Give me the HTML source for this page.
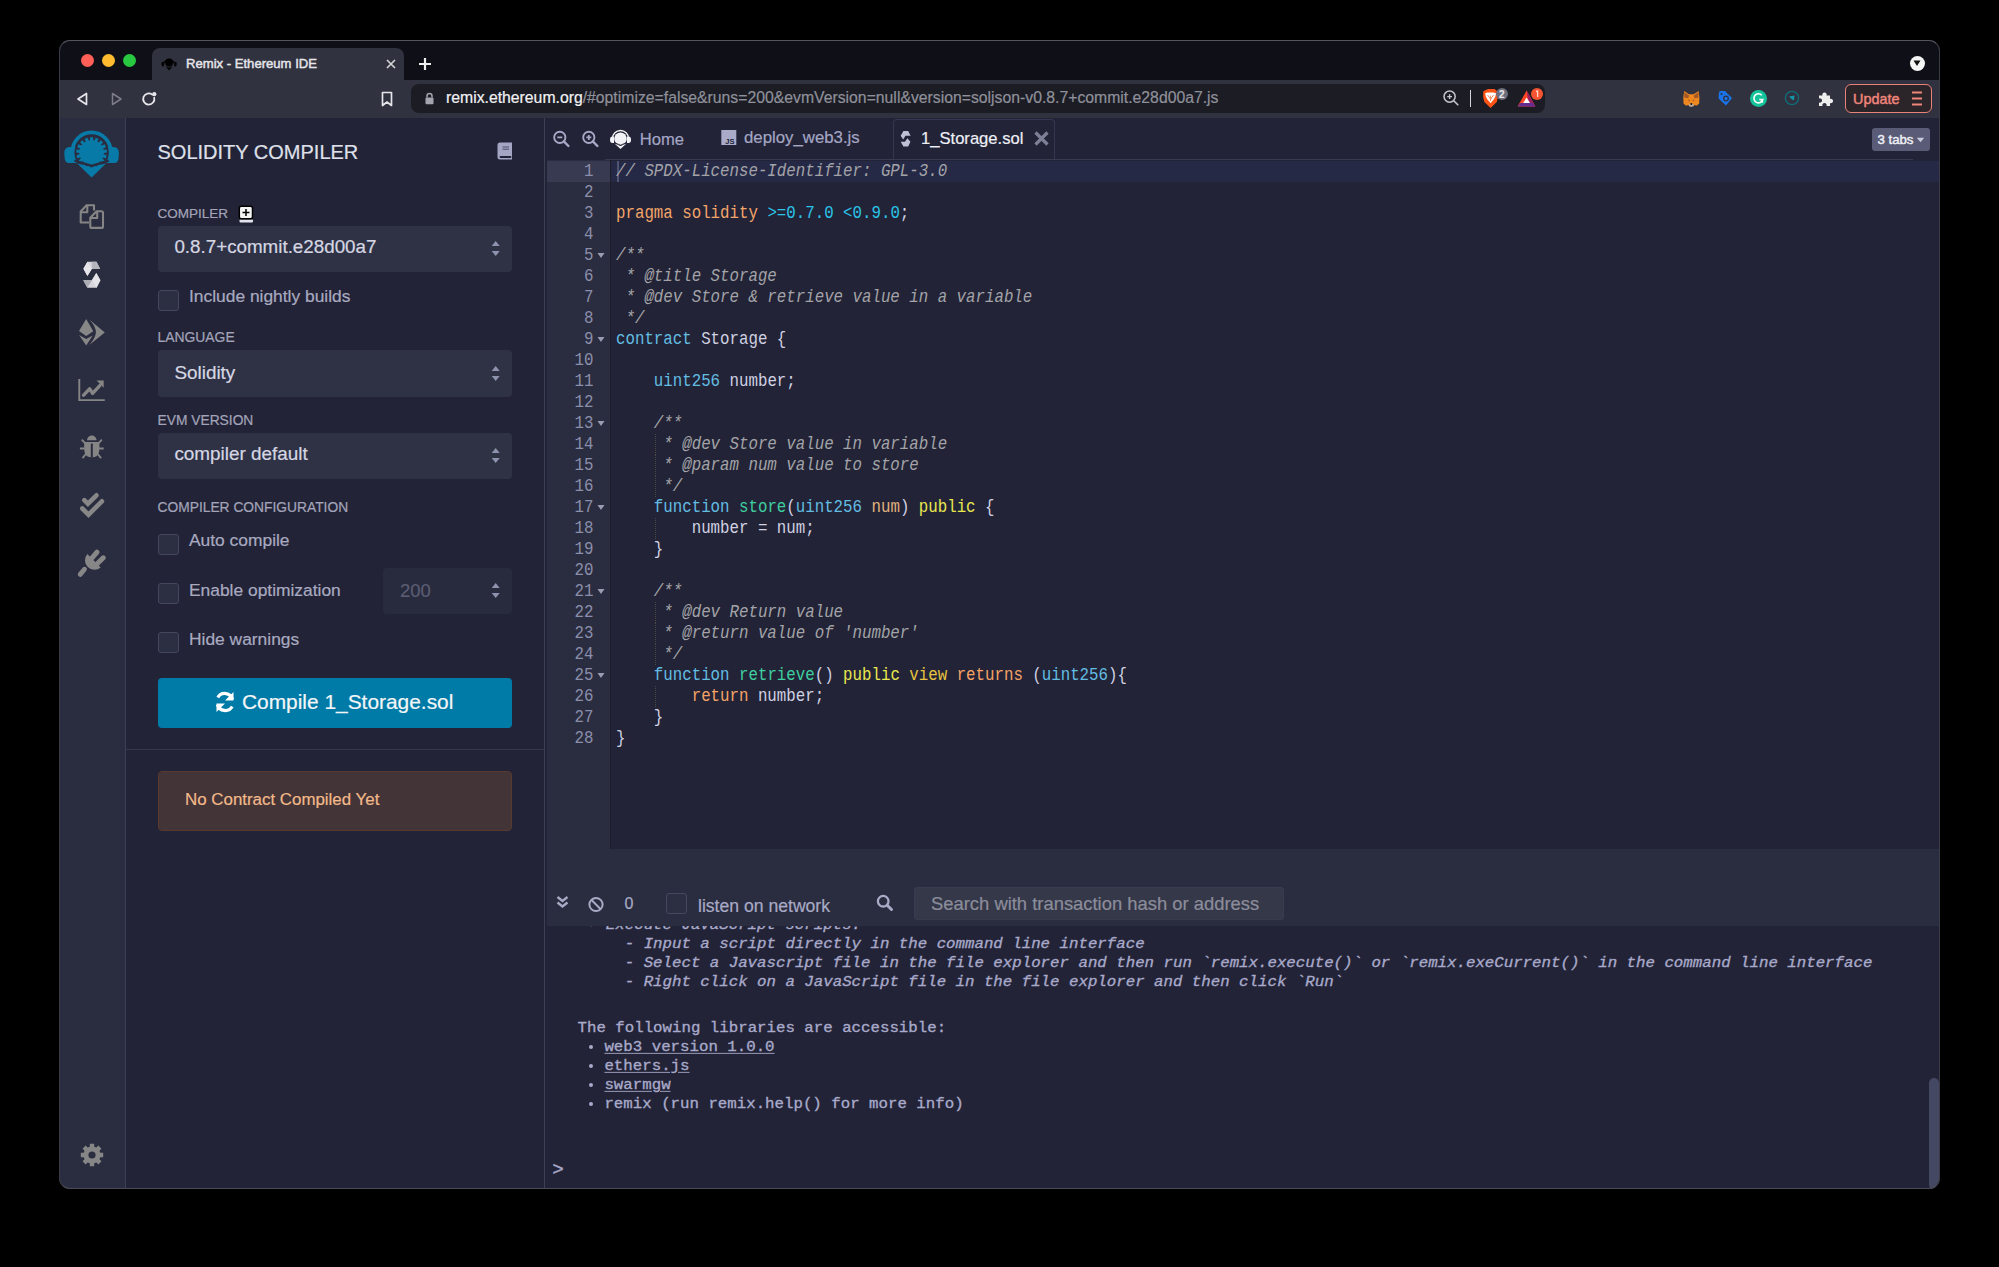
<!DOCTYPE html>
<html><head><meta charset="utf-8">
<style>
*{box-sizing:border-box;margin:0;padding:0}
html,body{width:1999px;height:1267px;background:#000;overflow:hidden;font-family:"Liberation Sans",sans-serif}
.a{position:absolute}
#win{position:absolute;left:59px;top:40px;width:1881px;height:1149px;overflow:hidden;border-radius:11px;background:#222336}
#pg{position:absolute;left:-59px;top:-40px;width:1999px;height:1267px}
#winb{position:absolute;left:59px;top:40px;width:1881px;height:1149px;border-radius:11px;border:1px solid #3a3b44;border-top-color:#55565d;border-bottom-color:#4a4b54;pointer-events:none}
.mono{font-family:"Liberation Mono",monospace}
.t{white-space:pre;line-height:1}
.t:not(.mono){-webkit-text-stroke-width:0.2px}
</style></head><body>
<div id="win"><div id="pg">
  <!-- title bar -->
  <div class="a" style="left:59px;top:40px;width:1881px;height:40px;background:#0e0f17"></div>
  <div class="a" style="left:80.5px;top:53.5px;width:13px;height:13px;border-radius:50%;background:#fe5f57"></div>
  <div class="a" style="left:101.5px;top:53.5px;width:13px;height:13px;border-radius:50%;background:#febc2e"></div>
  <div class="a" style="left:122.5px;top:53.5px;width:13px;height:13px;border-radius:50%;background:#28c840"></div>
  <!-- browser tab -->
  <div class="a" style="left:152px;top:48px;width:252px;height:33px;background:#30323f;border-radius:8px 8px 0 0"></div>
  <svg class="a" style="left:158px;top:53px" width="22" height="22" viewBox="158 53 22 22"><path d="M163.2 65A6 6 0 0 1 175 65" fill="none" stroke="#080808" stroke-width="1.3"/><path d="M163.8 61.8H162.6Q161.4 62 161.4 64Q161.5 66.3 162.8 66.4H164z" fill="#050505"/><path d="M174.4 61.8H175.6Q176.8 62 176.8 64Q176.7 66.3 175.4 66.4H174.2z" fill="#050505"/><circle cx="169.1" cy="62.6" r="4" fill="#000"/><path d="M165.6 66.2L169.1 67.6L172.6 66.2L169.1 70.6z" fill="#030303"/></svg>
  <div class="a t" style="left:186px;top:57.3px;font-size:13.1px;color:#e6e6ea;-webkit-text-stroke:0.45px #e6e6ea">Remix - Ethereum IDE</div>
  <svg class="a" style="left:386px;top:59px" width="10" height="10" viewBox="0 0 10 10"><path d="M1 1L9 9M9 1L1 9" stroke="#d6d6da" stroke-width="1.6"/></svg>
  <svg class="a" style="left:418px;top:57px" width="14" height="14" viewBox="0 0 14 14"><path d="M7 1V13M1 7H13" stroke="#f0f0f0" stroke-width="2.2"/></svg>
  <!-- title bar right dropdown -->
  <div class="a" style="left:1909.5px;top:55.5px;width:15px;height:15px;border-radius:50%;background:#f5f5f5"></div>
  <svg class="a" style="left:1911px;top:58px" width="12" height="10" viewBox="0 0 12 10"><path d="M2.5 2.5H9.5L6 8z" fill="#111"/></svg>
  <!-- toolbar -->
  <div class="a" style="left:59px;top:80px;width:1881px;height:38px;background:#30323f"></div>
  <svg class="a" style="left:74px;top:90px" width="18" height="18" viewBox="0 0 18 18"><path d="M12.5 3.5V14.5L4 9z" fill="none" stroke="#e6e6ea" stroke-width="1.7" stroke-linejoin="round"/></svg>
  <svg class="a" style="left:107px;top:90px" width="18" height="18" viewBox="0 0 18 18"><path d="M5.5 3.5V14.5L14 9z" fill="none" stroke="#7c7d88" stroke-width="1.5" stroke-linejoin="round"/></svg>
  <svg class="a" style="left:139px;top:89px" width="20" height="20" viewBox="0 0 20 20"><path d="M15.2 8.6A5.6 5.6 0 1 1 13.3 5.6" fill="none" stroke="#e6e6ea" stroke-width="1.8" stroke-linecap="round"/><circle cx="15.3" cy="5.2" r="2.1" fill="#e6e6ea"/></svg>
  <svg class="a" style="left:379px;top:90px" width="16" height="18" viewBox="0 0 16 18"><path d="M3.5 2.5H12.5V15.5L8 12L3.5 15.5z" fill="none" stroke="#e6e6ea" stroke-width="1.7" stroke-linejoin="round"/></svg>
  <!-- address bar -->
  <div class="a" style="left:411px;top:84px;width:1134px;height:29px;background:#1b1c24;border-radius:8px"></div>
  <svg class="a" style="left:424px;top:92px" width="11" height="13" viewBox="0 0 11 13"><path d="M3 5.5V4a2.5 2.5 0 0 1 5 0v1.5" fill="none" stroke="#a3a4ad" stroke-width="1.5"/><rect x="1.5" y="5.5" width="8" height="6.8" rx="1" fill="#a3a4ad"/></svg>
  <div class="a t" style="left:446px;top:90.4px;font-size:15.78px;color:#8f909a"><span style="color:#f2f2f4">remix.ethereum.org</span>/#optimize=false&amp;runs=200&amp;evmVersion=null&amp;version=soljson-v0.8.7+commit.e28d00a7.js</div>
  <svg class="a" style="left:1441.5px;top:89px" width="18" height="18" viewBox="0 0 18 18"><circle cx="7.6" cy="7.6" r="5.6" fill="none" stroke="#c4c5cc" stroke-width="1.5"/><path d="M11.7 11.7L15.8 15.8" stroke="#c4c5cc" stroke-width="1.6" stroke-linecap="round"/><path d="M7.6 5.2V10M5.2 7.6H10" stroke="#c4c5cc" stroke-width="1.4"/></svg>
  <div class="a" style="left:1469.5px;top:90px;width:1.3px;height:17px;background:#d6d6da"></div>
  <svg class="a" style="left:1478px;top:84px" width="24" height="28" viewBox="1478 84 24 28"><path d="M1488.2 89.1H1494.6L1496.2 90.6L1497.6 91.4L1497.8 97.5L1496.8 102L1490.6 108L1484.4 102L1483.2 97.5L1483.2 91.4L1484.8 90.6z" fill="#fb5215"/><path d="M1485.2 93.3L1487.5 92.6H1493.7L1496 93.3L1495.4 96.5L1493.8 99.5L1492.2 101.2L1490.6 103.2L1489 101.2L1487.4 99.5L1485.8 96.5z" fill="#fff"/><path d="M1487.6 95L1490.6 99.2L1493.6 95M1490.6 95.6V101" stroke="#f08a60" stroke-width="1" fill="none"/></svg>
  <div class="a" style="left:1495.7px;top:88.4px;width:12px;height:12px;border-radius:50%;background:#6b6d7b"></div>
  <div class="a t" style="left:1498.9px;top:90px;font-size:10px;font-weight:700;color:#e6e6ea">2</div>
  <svg class="a" style="left:1512px;top:84px" width="24" height="26" viewBox="1512 84 24 26"><path d="M1526.6 90.6L1535.4 106.6H1517.6z" fill="#ff4724"/><path d="M1526.6 90.6L1535.4 106.6H1529z" fill="#9e1f63"/><path d="M1517.6 106.6L1520.5 103H1532.7L1535.4 106.6z" fill="#662d91"/><path d="M1526.6 97.5L1530 103H1523.2z" fill="#fff"/></svg>
  <div class="a" style="left:1531.2px;top:88.4px;width:12px;height:12px;border-radius:50%;background:#f55530"></div>
  <svg class="a" style="left:1531.2px;top:88.4px" width="12" height="12" viewBox="0 0 12 12"><path d="M5 3.6L6.6 3V9" fill="none" stroke="#ffd8cc" stroke-width="1.3"/></svg>
  <!-- extensions -->
  <svg class="a" style="left:1678px;top:86px" width="26" height="24" viewBox="1678 86 26 24"><path d="M1684.2 91L1689 94.2H1693.6L1698.6 91L1699.4 97.5L1699.2 103.5L1697 105.4L1694 105.2L1691.3 106.5L1688.6 105.2L1685.6 105.4L1683.5 103.5L1683.3 97.5z" fill="#ee871f"/><path d="M1684.4 92L1689.2 95.8L1688.2 98.2L1684.3 97.8z" fill="#a55a26"/><path d="M1698.4 92L1693.6 95.8L1694.4 98.2L1698.4 97.8z" fill="#a55a26"/><circle cx="1689.2" cy="100.4" r="0.9" fill="#b4601f"/><circle cx="1693.5" cy="100.4" r="0.9" fill="#b4601f"/><ellipse cx="1691.3" cy="105.2" rx="2.6" ry="1.6" fill="#b8aa9e"/><circle cx="1691.3" cy="104.1" r="1" fill="#161616"/></svg>
  <svg class="a" style="left:1717px;top:90px" width="16" height="17" viewBox="0 0 16 17"><path d="M2 2.5Q2 1 3.5 1H8L15 8L9 15.5L1.5 8.5z" fill="#1a73e8"/><circle cx="9" cy="8.5" r="2.3" fill="none" stroke="#30323f" stroke-width="1.3"/><circle cx="4.5" cy="4" r="1" fill="#30323f"/></svg>
  <div class="a" style="left:1750px;top:89.7px;width:17px;height:17px;border-radius:50%;background:#15c39a"></div>
  <svg class="a" style="left:1750px;top:89.7px" width="17" height="17" viewBox="0 0 17 17"><path d="M11.8 5.3A4.5 4.5 0 1 0 12.8 9.5H9.3" fill="none" stroke="#fff" stroke-width="1.6"/><path d="M11 10.5L12.8 12.5" stroke="#fff" stroke-width="1.6"/></svg>
  <svg class="a" style="left:1784px;top:90px" width="16" height="16" viewBox="0 0 16 16"><circle cx="8" cy="8" r="6.6" fill="none" stroke="#0f6d7a" stroke-width="1.3"/><path d="M5 6.5L10.5 5.5L10 10.5L7.5 9z" fill="#1396a8"/></svg>
  <svg class="a" style="left:1817px;top:90px" width="17" height="17" viewBox="0 0 17 17"><path d="M2 5.5H5.5A2.2 2.2 0 1 1 9.5 5.5H13V9A2.2 2.2 0 1 1 13 13V16H9.5A2.2 2.2 0 1 0 5.5 16H2V12.5A2.2 2.2 0 1 0 2 8.5z" fill="#eeeeee"/></svg>
  <div class="a" style="left:1845px;top:84px;width:87px;height:29px;border-radius:6px;border:1.5px solid #e9837a;background:#2b2429"></div>
  <div class="a t" style="left:1853px;top:92.2px;font-size:14.4px;color:#f0857b;-webkit-text-stroke:0.45px #f0857b">Update</div>
  <svg class="a" style="left:1910px;top:90px" width="14" height="17" viewBox="0 0 14 17"><path d="M2 2.5H12M2 8.5H12M2 14.5H12" stroke="#f0857b" stroke-width="1.8"/></svg>
  <!-- icon panel -->
  <div class="a" style="left:59px;top:118px;width:67px;height:1071px;background:#2a2c3f;border-right:1px solid #3d3f54"></div>
  <!-- remix logo -->
  <svg class="a" style="left:62px;top:127px" width="60" height="54" viewBox="0 0 60 54">
    <path d="M10.50 24.50A19.1 19.1 0 0 1 48.70 24.50" fill="none" stroke="#087aa8" stroke-width="3.8"/>
    <path d="M2.3 26Q2.3 20.5 7.5 20H15V36H7Q3 36 2.6 31z" fill="#087aa8"/>
    <path d="M56.9 26Q56.9 20.5 51.7 20H44.2V36H52.2Q56.2 36 56.6 31z" fill="#087aa8"/>
    <circle cx="29.6" cy="25.5" r="17.2" fill="#2a2c3f"/>
    <path d="M27.97 13.31 L28.07 10.18 L31.13 10.18 L31.23 13.31 L32.48 13.54 L33.70 10.66 L36.57 11.77 L35.53 14.72 L36.61 15.39 L38.79 13.14 L41.06 15.21 L39.02 17.59 L39.79 18.61 L42.63 17.30 L44.00 20.04 L41.24 21.53 L41.59 22.75 L44.72 22.56 L45.00 25.61 L41.89 26.00 L41.77 27.27 L44.76 28.22 L43.92 31.17 L40.88 30.41 L40.31 31.54 L42.75 33.51 L40.90 35.96 L38.35 34.15 L37.41 35.01 L38.97 37.72 L36.36 39.34 L34.63 36.72 L33.44 37.18 L33.92 40.28 L30.91 40.84 L30.24 37.78 L28.96 37.78 L28.29 40.84 L25.28 40.28 L25.76 37.18 L24.57 36.72 L22.84 39.34 L20.23 37.72 L21.79 35.01 L20.85 34.15 L18.30 35.96 L16.45 33.51 L18.89 31.54 L18.32 30.41 L15.28 31.17 L14.44 28.22 L17.43 27.27 L17.31 26.00 L14.20 25.61 L14.48 22.56 L17.61 22.75 L17.96 21.53 L15.20 20.04 L16.57 17.30 L19.41 18.61 L20.18 17.59 L18.14 15.21 L20.41 13.14 L22.59 15.39 L23.67 14.72 L22.63 11.77 L25.50 10.66 L26.72 13.54Z" fill="#087aa8"/>
    <path d="M12.5 33.6L29.6 38.9L46.7 33.6" fill="none" stroke="#2a2c3f" stroke-width="2.5"/>
    <path d="M15 36.2L29.6 40.6L44.2 36.2L29.6 50.4z" fill="#087aa8"/>
  </svg>
  <!-- files icon -->
  <svg class="a" style="left:74px;top:198px" width="36" height="38" viewBox="74 198 36 38"><g fill="none" stroke="#858585" stroke-width="2.1" stroke-linejoin="round"><path d="M94 210.5V205.3H86.6L80.7 211.5V222.5H89"/><path d="M87.3 205.5V212.3H80.7"/><path d="M90.3 217.8L96.6 211.3H101.5Q103 211.3 103 212.8V226.4Q103 227.9 101.5 227.9H91.8Q90.3 227.9 90.3 226.4z"/><path d="M97.2 211.5V218H90.3"/></g></svg>
  <!-- solidity icon -->
  <svg class="a" style="left:76px;top:256px" width="32" height="36" viewBox="76 256 32 36"><path d="M87.4 261.7L96.5 261.7L100.1 268.8L91.9 268.8L87.4 276L83.4 268.8z" fill="#d6d6dc"/><path d="M87.4 261.7L91.9 268.8L87.4 276L83.4 268.8z" fill="#e6e6ea"/><path d="M91.9 261.7L96.5 261.7L100.1 268.8L91.9 268.8z" fill="#b4b4bc"/><path d="M96.3 273L100.4 280.2L96.7 287.8L87.4 287.8L83.2 280.2L91.9 280.2z" fill="#d6d6dc"/><path d="M96.3 273L100.4 280.2L96.3 287.8L91.9 280.2z" fill="#e4e4e8"/><path d="M83.2 280.2L91.9 280.2L87.4 287.8z" fill="#acacb4"/></svg>
  <!-- deploy icon -->
  <svg class="a" style="left:74px;top:314px" width="36" height="36" viewBox="74 314 36 36"><path d="M86.2 319.1L93.3 331.3L86.2 335.9L79 331z" fill="#878787"/><path d="M79.1 335L86.2 339L92.75 335.6L86.2 345.5z" fill="#878787"/><path d="M89.3 319.4L104.8 332.5L89.3 345Q94.8 339 95.9 333Q96.3 326.5 89.3 319.4z" fill="#878787"/></svg>
  <!-- chart icon -->
  <svg class="a" style="left:78px;top:377px" width="28" height="26" viewBox="0 0 28 26"><path d="M1.3 2V23.1H26.8" fill="none" stroke="#858585" stroke-width="1.9"/><path d="M5.6 18.2L11.6 11.8L14.6 16.4L21.8 8.6" fill="none" stroke="#858585" stroke-width="3.4" stroke-linecap="round" stroke-linejoin="round"/><path d="M18.6 3.5H25.7V10.8z" fill="#858585"/></svg>
  <!-- bug icon -->
  <svg class="a" style="left:79px;top:434px" width="26" height="27" viewBox="0 0 26 27"><path d="M8 6.3A4.8 4.8 0 0 1 17.6 6.3z" fill="#858585"/><path d="M5.6 8H20.2Q21 16 19.4 20Q17.4 23.2 13.8 23.2H11.8Q8.2 23.2 6.2 20Q4.6 16 5.4 8z" fill="#858585"/><path d="M12.8 9.6V23.6" stroke="#2a2c3f" stroke-width="2"/><path d="M2.8 5.6L6.2 9.3M0.9 14.5H5.6M3.5 24.1L6.9 20M22.8 5.6L19.4 9.3M24.7 14.5H20M22.1 24.1L18.7 20" stroke="#858585" stroke-width="1.9"/></svg>
  <!-- double check icon -->
  <svg class="a" style="left:74px;top:488px" width="36" height="36" viewBox="74 488 36 36"><path d="M84.3 500.2L87.9 503.75L96.5 495.3" fill="none" stroke="#878787" stroke-width="4.6" stroke-linecap="round" stroke-linejoin="miter"/><path d="M82.3 508.5L88.5 514.7L101.9 501.3" fill="none" stroke="#878787" stroke-width="4.6" stroke-linecap="round" stroke-linejoin="miter"/></svg>
  <!-- plug icon -->
  <svg class="a" style="left:74px;top:545px" width="36" height="36" viewBox="74 545 36 36"><path d="M87.35 554.1L100.7 567.4A9.44 9.44 0 0 1 87.35 554.1z" fill="#878787"/><path d="M91 559.2L97 552.1M96.7 564.3L103.3 557.8" stroke="#878787" stroke-width="5" stroke-linecap="round"/><path d="M84.5 569.2L80.2 574.4" stroke="#878787" stroke-width="4.8" stroke-linecap="round"/></svg>
  <!-- gear -->
  <svg class="a" style="left:80px;top:1142.5px" width="24" height="24" viewBox="0 0 24 24"><path fill="#868686" fill-rule="evenodd" d="M9.77 3.69 L9.82 0.81 L14.18 0.81 L14.23 3.69 L16.30 4.55 L18.37 2.55 L21.45 5.63 L19.45 7.70 L20.31 9.77 L23.19 9.82 L23.19 14.18 L20.31 14.23 L19.45 16.30 L21.45 18.37 L18.37 21.45 L16.30 19.45 L14.23 20.31 L14.18 23.19 L9.82 23.19 L9.77 20.31 L7.70 19.45 L5.63 21.45 L2.55 18.37 L4.55 16.30 L3.69 14.23 L0.81 14.18 L0.81 9.82 L3.69 9.77 L4.55 7.70 L2.55 5.63 L5.63 2.55 L7.70 4.55 Z M8.40 12.00 a3.60 3.60 0 1 0 7.20 0 a3.60 3.60 0 1 0 -7.20 0z"/></svg>

  <!-- sidebar -->
  <div class="a" style="left:126px;top:118px;width:419px;height:1071px;background:#222336;border-right:1px solid #3d3f54"></div>
  <div class="a t" style="left:157.5px;top:142.1px;font-size:20px;color:#dfe0ea">SOLIDITY COMPILER</div>
  <svg class="a" style="left:496.5px;top:142px" width="16" height="18" viewBox="0 0 16 18"><path d="M3 0.5H15V17.5H3A2.5 2.5 0 0 1 0.5 15V3A2.5 2.5 0 0 1 3 0.5z" fill="#a3a5c3"/><path d="M5.5 5H12M5.5 7.2H12" stroke="#4a4c66" stroke-width="1"/><path d="M3.5 15H13.5" stroke="#222336" stroke-width="1.8" stroke-linecap="round"/></svg>
  <div class="a t" style="left:157.5px;top:207.2px;font-size:13.5px;color:#a3a4b9">COMPILER</div>
  <svg class="a" style="left:238px;top:205px" width="16" height="18" viewBox="0 0 16 18"><rect x="1.5" y="14.5" width="13.5" height="3" rx="1" fill="#e4e4ee"/><rect x="1.3" y="1.2" width="13.2" height="12.6" rx="2" fill="#f4f4f4" stroke="#000" stroke-width="1.5"/><path d="M8 4V11M4.5 7.5H11.5" stroke="#000" stroke-width="1.5"/></svg>

  <div class="a" style="left:157.5px;top:225.5px;width:354px;height:46px;background:#2f3245;border-radius:4px"></div>
  <div class="a t" style="left:174.4px;top:238.1px;font-size:18.8px;color:#d6d7e3">0.8.7+commit.e28d00a7</div>
  <svg class="a" style="left:490px;top:240px" width="12" height="18" viewBox="0 0 12 18"><path d="M1.7 6.1L5.7 1L9.7 6.1zM1.7 10.9H9.7L5.7 16.1z" fill="#8d92ae"/></svg>

  <div class="a" style="left:157.5px;top:290px;width:21px;height:21px;background:#2c2e42;border:1px solid #44475e;border-radius:3px"></div>
  <div class="a t" style="left:189px;top:288.3px;font-size:17.4px;color:#a9aac0">Include nightly builds</div>

  <div class="a t" style="left:157.5px;top:331.2px;font-size:13.9px;color:#a3a4b9">LANGUAGE</div>
  <div class="a" style="left:157.5px;top:349.5px;width:354px;height:47px;background:#2f3245;border-radius:4px"></div>
  <div class="a t" style="left:174.4px;top:363.6px;font-size:18.9px;color:#d6d7e3">Solidity</div>
  <svg class="a" style="left:490px;top:365px" width="12" height="18" viewBox="0 0 12 18"><path d="M1.7 6.1L5.7 1L9.7 6.1zM1.7 10.9H9.7L5.7 16.1z" fill="#8d92ae"/></svg>

  <div class="a t" style="left:157.5px;top:413.9px;font-size:13.8px;color:#a3a4b9">EVM VERSION</div>
  <div class="a" style="left:157.5px;top:432.5px;width:354px;height:46px;background:#2f3245;border-radius:4px"></div>
  <div class="a t" style="left:174.4px;top:445px;font-size:18.9px;color:#d6d7e3">compiler default</div>
  <svg class="a" style="left:490px;top:447px" width="12" height="18" viewBox="0 0 12 18"><path d="M1.7 6.1L5.7 1L9.7 6.1zM1.7 10.9H9.7L5.7 16.1z" fill="#8d92ae"/></svg>

  <div class="a t" style="left:157.5px;top:500.7px;font-size:13.8px;color:#a3a4b9">COMPILER CONFIGURATION</div>
  <div class="a" style="left:157.5px;top:533.5px;width:21px;height:21px;background:#2c2e42;border:1px solid #44475e;border-radius:3px"></div>
  <div class="a t" style="left:189px;top:532.3px;font-size:17.4px;color:#a9aac0">Auto compile</div>
  <div class="a" style="left:157.5px;top:583px;width:21px;height:21px;background:#2c2e42;border:1px solid #44475e;border-radius:3px"></div>
  <div class="a t" style="left:189px;top:581.7px;font-size:17.4px;color:#a9aac0">Enable optimization</div>
  <div class="a" style="left:382.5px;top:568px;width:129px;height:46px;background:#282a3d;border-radius:4px"></div>
  <div class="a t" style="left:400px;top:581.5px;font-size:18.5px;color:#5b5d73">200</div>
  <svg class="a" style="left:490px;top:582px" width="12" height="18" viewBox="0 0 12 18"><path d="M1.7 6.1L5.7 1L9.7 6.1zM1.7 10.9H9.7L5.7 16.1z" fill="#8d92ae"/></svg>
  <div class="a" style="left:157.5px;top:632px;width:21px;height:21px;background:#2c2e42;border:1px solid #44475e;border-radius:3px"></div>
  <div class="a t" style="left:189px;top:631.3px;font-size:17.4px;color:#a9aac0">Hide warnings</div>

  <div class="a" style="left:157.5px;top:677.5px;width:354px;height:50px;background:#007aa6;border-radius:4px"></div>
  <svg class="a" style="left:212.5px;top:690px" width="24" height="24" viewBox="0 0 24 24"><path d="M19.5 9.5A8 8 0 0 0 4.8 7.5" fill="none" stroke="#fff" stroke-width="3.2"/><path d="M20.5 2V10.5H12z" fill="#fff"/><path d="M4.5 14.5A8 8 0 0 0 19.2 16.5" fill="none" stroke="#fff" stroke-width="3.2"/><path d="M3.5 22V13.5H12z" fill="#fff"/></svg>
  <div class="a t" style="left:242px;top:692.1px;font-size:20.9px;color:#f4f6f8">Compile 1_Storage.sol</div>

  <div class="a" style="left:126px;top:748.5px;width:418px;height:1px;background:#35374b"></div>
  <div class="a" style="left:157.5px;top:770.5px;width:354px;height:60px;background:#433437;border:1px solid #57392d;border-radius:4px"></div>
  <div class="a t" style="left:185px;top:792.3px;font-size:16.9px;color:#f2b98a">No Contract Compiled Yet</div>
  <!-- editor -->
  <div class="a" style="left:545px;top:118px;width:1395px;height:731px;background:#222336"></div>
  <div class="a" style="left:605px;top:159px;width:1308px;height:1.2px;background:#393b50"></div>
  <div class="a" style="left:546.6px;top:160px;width:63.6px;height:689px;background:#2a2c3f"></div>
  <div class="a" style="left:546.6px;top:160.8px;width:63.6px;height:21px;background:#383a52"></div>
  <div class="a" style="left:610px;top:160px;width:1px;height:689px;background:#1d1e29"></div>
  <div class="a" style="left:611px;top:160.8px;width:1329px;height:21px;background:#252946"></div>
  <div class="a" style="left:616.5px;top:160.8px;width:2px;height:21px;background:#4f5472"></div>
  <div class="a t mono" style="left:560px;top:160.8px;width:33.5px;height:21px;line-height:21px;font-size:15.78px;text-align:right;color:#8c8fab;transform:translateY(0.8px) scaleY(1.12);transform-origin:0 9.5px">1</div>
  <div class="a t mono" style="left:616px;top:160.8px;height:21px;line-height:21px;font-size:15.78px;transform:translateY(0.8px) scaleY(1.12);transform-origin:0 9.5px"><span style="color:#a3a3a8;font-style:italic;">// SPDX-License-Identifier: GPL-3.0</span></div>
  <div class="a t mono" style="left:560px;top:181.8px;width:33.5px;height:21px;line-height:21px;font-size:15.78px;text-align:right;color:#8c8fab;transform:translateY(0.8px) scaleY(1.12);transform-origin:0 9.5px">2</div>
  <div class="a t mono" style="left:560px;top:202.8px;width:33.5px;height:21px;line-height:21px;font-size:15.78px;text-align:right;color:#8c8fab;transform:translateY(0.8px) scaleY(1.12);transform-origin:0 9.5px">3</div>
  <div class="a t mono" style="left:616px;top:202.8px;height:21px;line-height:21px;font-size:15.78px;transform:translateY(0.8px) scaleY(1.12);transform-origin:0 9.5px"><span style="color:#f4a66a;">pragma solidity</span><span style="color:#d0d1e2;"> </span><span style="color:#2bc4ea;">&gt;=0.7.0 &lt;0.9.0</span><span style="color:#d0d1e2;">;</span></div>
  <div class="a t mono" style="left:560px;top:223.8px;width:33.5px;height:21px;line-height:21px;font-size:15.78px;text-align:right;color:#8c8fab;transform:translateY(0.8px) scaleY(1.12);transform-origin:0 9.5px">4</div>
  <div class="a t mono" style="left:560px;top:244.8px;width:33.5px;height:21px;line-height:21px;font-size:15.78px;text-align:right;color:#8c8fab;transform:translateY(0.8px) scaleY(1.12);transform-origin:0 9.5px">5</div>
  <svg class="a" style="left:597px;top:251.8px" width="8" height="7" viewBox="0 0 8 7"><path d="M0.5 1H7.5L4 6z" fill="#9a9cb4"/></svg>
  <div class="a t mono" style="left:616px;top:244.8px;height:21px;line-height:21px;font-size:15.78px;transform:translateY(0.8px) scaleY(1.12);transform-origin:0 9.5px"><span style="color:#a3a3a8;font-style:italic;">/**</span></div>
  <div class="a t mono" style="left:560px;top:265.8px;width:33.5px;height:21px;line-height:21px;font-size:15.78px;text-align:right;color:#8c8fab;transform:translateY(0.8px) scaleY(1.12);transform-origin:0 9.5px">6</div>
  <div class="a t mono" style="left:616px;top:265.8px;height:21px;line-height:21px;font-size:15.78px;transform:translateY(0.8px) scaleY(1.12);transform-origin:0 9.5px"><span style="color:#a3a3a8;font-style:italic;"> * @title Storage</span></div>
  <div class="a t mono" style="left:560px;top:286.8px;width:33.5px;height:21px;line-height:21px;font-size:15.78px;text-align:right;color:#8c8fab;transform:translateY(0.8px) scaleY(1.12);transform-origin:0 9.5px">7</div>
  <div class="a t mono" style="left:616px;top:286.8px;height:21px;line-height:21px;font-size:15.78px;transform:translateY(0.8px) scaleY(1.12);transform-origin:0 9.5px"><span style="color:#a3a3a8;font-style:italic;"> * @dev Store &amp; retrieve value in a variable</span></div>
  <div class="a t mono" style="left:560px;top:307.8px;width:33.5px;height:21px;line-height:21px;font-size:15.78px;text-align:right;color:#8c8fab;transform:translateY(0.8px) scaleY(1.12);transform-origin:0 9.5px">8</div>
  <div class="a t mono" style="left:616px;top:307.8px;height:21px;line-height:21px;font-size:15.78px;transform:translateY(0.8px) scaleY(1.12);transform-origin:0 9.5px"><span style="color:#a3a3a8;font-style:italic;"> */</span></div>
  <div class="a t mono" style="left:560px;top:328.8px;width:33.5px;height:21px;line-height:21px;font-size:15.78px;text-align:right;color:#8c8fab;transform:translateY(0.8px) scaleY(1.12);transform-origin:0 9.5px">9</div>
  <svg class="a" style="left:597px;top:335.8px" width="8" height="7" viewBox="0 0 8 7"><path d="M0.5 1H7.5L4 6z" fill="#9a9cb4"/></svg>
  <div class="a t mono" style="left:616px;top:328.8px;height:21px;line-height:21px;font-size:15.78px;transform:translateY(0.8px) scaleY(1.12);transform-origin:0 9.5px"><span style="color:#62bde3;">contract</span><span style="color:#d0d1e2;"> Storage {</span></div>
  <div class="a t mono" style="left:560px;top:349.8px;width:33.5px;height:21px;line-height:21px;font-size:15.78px;text-align:right;color:#8c8fab;transform:translateY(0.8px) scaleY(1.12);transform-origin:0 9.5px">10</div>
  <div class="a t mono" style="left:560px;top:370.8px;width:33.5px;height:21px;line-height:21px;font-size:15.78px;text-align:right;color:#8c8fab;transform:translateY(0.8px) scaleY(1.12);transform-origin:0 9.5px">11</div>
  <div class="a t mono" style="left:616px;top:370.8px;height:21px;line-height:21px;font-size:15.78px;transform:translateY(0.8px) scaleY(1.12);transform-origin:0 9.5px"><span style="color:#d0d1e2;">    </span><span style="color:#62bde3;">uint256</span><span style="color:#d0d1e2;"> number;</span></div>
  <div class="a t mono" style="left:560px;top:391.8px;width:33.5px;height:21px;line-height:21px;font-size:15.78px;text-align:right;color:#8c8fab;transform:translateY(0.8px) scaleY(1.12);transform-origin:0 9.5px">12</div>
  <div class="a t mono" style="left:560px;top:412.8px;width:33.5px;height:21px;line-height:21px;font-size:15.78px;text-align:right;color:#8c8fab;transform:translateY(0.8px) scaleY(1.12);transform-origin:0 9.5px">13</div>
  <svg class="a" style="left:597px;top:419.8px" width="8" height="7" viewBox="0 0 8 7"><path d="M0.5 1H7.5L4 6z" fill="#9a9cb4"/></svg>
  <div class="a t mono" style="left:616px;top:412.8px;height:21px;line-height:21px;font-size:15.78px;transform:translateY(0.8px) scaleY(1.12);transform-origin:0 9.5px"><span style="color:#a3a3a8;font-style:italic;">    /**</span></div>
  <div class="a t mono" style="left:560px;top:433.8px;width:33.5px;height:21px;line-height:21px;font-size:15.78px;text-align:right;color:#8c8fab;transform:translateY(0.8px) scaleY(1.12);transform-origin:0 9.5px">14</div>
  <div class="a" style="left:654.5px;top:433.8px;width:1px;height:21px;border-left:1px dotted #4a4a45"></div>
  <div class="a t mono" style="left:616px;top:433.8px;height:21px;line-height:21px;font-size:15.78px;transform:translateY(0.8px) scaleY(1.12);transform-origin:0 9.5px"><span style="color:#a3a3a8;font-style:italic;">     * @dev Store value in variable</span></div>
  <div class="a t mono" style="left:560px;top:454.8px;width:33.5px;height:21px;line-height:21px;font-size:15.78px;text-align:right;color:#8c8fab;transform:translateY(0.8px) scaleY(1.12);transform-origin:0 9.5px">15</div>
  <div class="a" style="left:654.5px;top:454.8px;width:1px;height:21px;border-left:1px dotted #4a4a45"></div>
  <div class="a t mono" style="left:616px;top:454.8px;height:21px;line-height:21px;font-size:15.78px;transform:translateY(0.8px) scaleY(1.12);transform-origin:0 9.5px"><span style="color:#a3a3a8;font-style:italic;">     * @param num value to store</span></div>
  <div class="a t mono" style="left:560px;top:475.8px;width:33.5px;height:21px;line-height:21px;font-size:15.78px;text-align:right;color:#8c8fab;transform:translateY(0.8px) scaleY(1.12);transform-origin:0 9.5px">16</div>
  <div class="a" style="left:654.5px;top:475.8px;width:1px;height:21px;border-left:1px dotted #4a4a45"></div>
  <div class="a t mono" style="left:616px;top:475.8px;height:21px;line-height:21px;font-size:15.78px;transform:translateY(0.8px) scaleY(1.12);transform-origin:0 9.5px"><span style="color:#a3a3a8;font-style:italic;">     */</span></div>
  <div class="a t mono" style="left:560px;top:496.8px;width:33.5px;height:21px;line-height:21px;font-size:15.78px;text-align:right;color:#8c8fab;transform:translateY(0.8px) scaleY(1.12);transform-origin:0 9.5px">17</div>
  <svg class="a" style="left:597px;top:503.8px" width="8" height="7" viewBox="0 0 8 7"><path d="M0.5 1H7.5L4 6z" fill="#9a9cb4"/></svg>
  <div class="a t mono" style="left:616px;top:496.8px;height:21px;line-height:21px;font-size:15.78px;transform:translateY(0.8px) scaleY(1.12);transform-origin:0 9.5px"><span style="color:#62bde3;">    function</span><span style="color:#d0d1e2;"> </span><span style="color:#3fcea0;">store</span><span style="color:#d0d1e2;">(</span><span style="color:#62bde3;">uint256</span><span style="color:#d0d1e2;"> </span><span style="color:#e2b27e;">num</span><span style="color:#d0d1e2;">)</span><span style="color:#d0d1e2;"> </span><span style="color:#e9e84f;">public</span><span style="color:#d0d1e2;"> {</span></div>
  <div class="a t mono" style="left:560px;top:517.8px;width:33.5px;height:21px;line-height:21px;font-size:15.78px;text-align:right;color:#8c8fab;transform:translateY(0.8px) scaleY(1.12);transform-origin:0 9.5px">18</div>
  <div class="a" style="left:654.5px;top:517.8px;width:1px;height:21px;border-left:1px dotted #4a4a45"></div>
  <div class="a t mono" style="left:616px;top:517.8px;height:21px;line-height:21px;font-size:15.78px;transform:translateY(0.8px) scaleY(1.12);transform-origin:0 9.5px"><span style="color:#d0d1e2;">        number = num;</span></div>
  <div class="a t mono" style="left:560px;top:538.8px;width:33.5px;height:21px;line-height:21px;font-size:15.78px;text-align:right;color:#8c8fab;transform:translateY(0.8px) scaleY(1.12);transform-origin:0 9.5px">19</div>
  <div class="a t mono" style="left:616px;top:538.8px;height:21px;line-height:21px;font-size:15.78px;transform:translateY(0.8px) scaleY(1.12);transform-origin:0 9.5px"><span style="color:#d0d1e2;">    }</span></div>
  <div class="a t mono" style="left:560px;top:559.8px;width:33.5px;height:21px;line-height:21px;font-size:15.78px;text-align:right;color:#8c8fab;transform:translateY(0.8px) scaleY(1.12);transform-origin:0 9.5px">20</div>
  <div class="a t mono" style="left:560px;top:580.8px;width:33.5px;height:21px;line-height:21px;font-size:15.78px;text-align:right;color:#8c8fab;transform:translateY(0.8px) scaleY(1.12);transform-origin:0 9.5px">21</div>
  <svg class="a" style="left:597px;top:587.8px" width="8" height="7" viewBox="0 0 8 7"><path d="M0.5 1H7.5L4 6z" fill="#9a9cb4"/></svg>
  <div class="a t mono" style="left:616px;top:580.8px;height:21px;line-height:21px;font-size:15.78px;transform:translateY(0.8px) scaleY(1.12);transform-origin:0 9.5px"><span style="color:#a3a3a8;font-style:italic;">    /**</span></div>
  <div class="a t mono" style="left:560px;top:601.8px;width:33.5px;height:21px;line-height:21px;font-size:15.78px;text-align:right;color:#8c8fab;transform:translateY(0.8px) scaleY(1.12);transform-origin:0 9.5px">22</div>
  <div class="a" style="left:654.5px;top:601.8px;width:1px;height:21px;border-left:1px dotted #4a4a45"></div>
  <div class="a t mono" style="left:616px;top:601.8px;height:21px;line-height:21px;font-size:15.78px;transform:translateY(0.8px) scaleY(1.12);transform-origin:0 9.5px"><span style="color:#a3a3a8;font-style:italic;">     * @dev Return value</span></div>
  <div class="a t mono" style="left:560px;top:622.8px;width:33.5px;height:21px;line-height:21px;font-size:15.78px;text-align:right;color:#8c8fab;transform:translateY(0.8px) scaleY(1.12);transform-origin:0 9.5px">23</div>
  <div class="a" style="left:654.5px;top:622.8px;width:1px;height:21px;border-left:1px dotted #4a4a45"></div>
  <div class="a t mono" style="left:616px;top:622.8px;height:21px;line-height:21px;font-size:15.78px;transform:translateY(0.8px) scaleY(1.12);transform-origin:0 9.5px"><span style="color:#a3a3a8;font-style:italic;">     * @return value of &#x27;number&#x27;</span></div>
  <div class="a t mono" style="left:560px;top:643.8px;width:33.5px;height:21px;line-height:21px;font-size:15.78px;text-align:right;color:#8c8fab;transform:translateY(0.8px) scaleY(1.12);transform-origin:0 9.5px">24</div>
  <div class="a" style="left:654.5px;top:643.8px;width:1px;height:21px;border-left:1px dotted #4a4a45"></div>
  <div class="a t mono" style="left:616px;top:643.8px;height:21px;line-height:21px;font-size:15.78px;transform:translateY(0.8px) scaleY(1.12);transform-origin:0 9.5px"><span style="color:#a3a3a8;font-style:italic;">     */</span></div>
  <div class="a t mono" style="left:560px;top:664.8px;width:33.5px;height:21px;line-height:21px;font-size:15.78px;text-align:right;color:#8c8fab;transform:translateY(0.8px) scaleY(1.12);transform-origin:0 9.5px">25</div>
  <svg class="a" style="left:597px;top:671.8px" width="8" height="7" viewBox="0 0 8 7"><path d="M0.5 1H7.5L4 6z" fill="#9a9cb4"/></svg>
  <div class="a t mono" style="left:616px;top:664.8px;height:21px;line-height:21px;font-size:15.78px;transform:translateY(0.8px) scaleY(1.12);transform-origin:0 9.5px"><span style="color:#62bde3;">    function</span><span style="color:#d0d1e2;"> </span><span style="color:#3fcea0;">retrieve</span><span style="color:#d0d1e2;">()</span><span style="color:#d0d1e2;"> </span><span style="color:#e9e84f;">public</span><span style="color:#d0d1e2;"> </span><span style="color:#e6c23e;">view</span><span style="color:#d0d1e2;"> </span><span style="color:#f5a266;">returns</span><span style="color:#d0d1e2;"> (</span><span style="color:#62bde3;">uint256</span><span style="color:#d0d1e2;">){</span></div>
  <div class="a t mono" style="left:560px;top:685.8px;width:33.5px;height:21px;line-height:21px;font-size:15.78px;text-align:right;color:#8c8fab;transform:translateY(0.8px) scaleY(1.12);transform-origin:0 9.5px">26</div>
  <div class="a" style="left:654.5px;top:685.8px;width:1px;height:21px;border-left:1px dotted #4a4a45"></div>
  <div class="a t mono" style="left:616px;top:685.8px;height:21px;line-height:21px;font-size:15.78px;transform:translateY(0.8px) scaleY(1.12);transform-origin:0 9.5px"><span style="color:#d0d1e2;">        </span><span style="color:#f5a266;">return</span><span style="color:#d0d1e2;"> number;</span></div>
  <div class="a t mono" style="left:560px;top:706.8px;width:33.5px;height:21px;line-height:21px;font-size:15.78px;text-align:right;color:#8c8fab;transform:translateY(0.8px) scaleY(1.12);transform-origin:0 9.5px">27</div>
  <div class="a t mono" style="left:616px;top:706.8px;height:21px;line-height:21px;font-size:15.78px;transform:translateY(0.8px) scaleY(1.12);transform-origin:0 9.5px"><span style="color:#d0d1e2;">    }</span></div>
  <div class="a t mono" style="left:560px;top:727.8px;width:33.5px;height:21px;line-height:21px;font-size:15.78px;text-align:right;color:#8c8fab;transform:translateY(0.8px) scaleY(1.12);transform-origin:0 9.5px">28</div>
  <div class="a t mono" style="left:616px;top:727.8px;height:21px;line-height:21px;font-size:15.78px;transform:translateY(0.8px) scaleY(1.12);transform-origin:0 9.5px"><span style="color:#d0d1e2;">}</span></div>
  <!-- tabbar -->
  <svg class="a" style="left:551px;top:129px" width="20" height="20" viewBox="0 0 20 20"><circle cx="8.8" cy="8.4" r="5.6" fill="none" stroke="#a6a8c6" stroke-width="1.9"/><path d="M12.8 12.4L17.4 17" stroke="#a6a8c6" stroke-width="2.4" stroke-linecap="round"/><path d="M6.3 8.4H11.3" stroke="#a6a8c6" stroke-width="1.8"/></svg>
  <svg class="a" style="left:580px;top:129px" width="20" height="20" viewBox="0 0 20 20"><circle cx="8.8" cy="8.4" r="5.6" fill="none" stroke="#a6a8c6" stroke-width="1.9"/><path d="M12.8 12.4L17.4 17" stroke="#a6a8c6" stroke-width="2.4" stroke-linecap="round"/><path d="M6.3 8.4H11.3M8.8 5.9V10.9" stroke="#a6a8c6" stroke-width="1.8"/></svg>
  <svg class="a" style="left:609px;top:129px" width="23" height="21" viewBox="0 0 23 21"><path d="M3.5 9.5A8 8 0 0 1 19.5 9.5" fill="none" stroke="#f2f2f6" stroke-width="1.4"/><path d="M3.5 7.5H5V14H3.5Q1 14 1 10.7Q1 7.5 3.5 7.5z" fill="#f2f2f6"/><path d="M19.5 7.5H18V14H19.5Q22 14 22 10.7Q22 7.5 19.5 7.5z" fill="#f2f2f6"/><circle cx="11.5" cy="9.7" r="6.3" fill="#f2f2f6"/><path d="M5.5 14.5L11.5 17L17.5 14.5L11.5 20z" fill="#f2f2f6"/><path d="M5.8 13.8L11.5 16.2L17.2 13.8" fill="none" stroke="#222336" stroke-width="0.9"/></svg>
  <div class="a t" style="left:639.8px;top:131.8px;font-size:16.6px;color:#a4a6c4">Home</div>
  <svg class="a" style="left:720.5px;top:130px" width="16" height="16" viewBox="0 0 16 16"><rect x="0.3" y="0" width="15" height="15" fill="#a9abc9"/><text x="4.2" y="13.8" font-family="Liberation Sans" font-size="7.6" font-weight="700" fill="#222336">JS</text></svg>
  <div class="a t" style="left:744px;top:129.6px;font-size:16.8px;color:#a4a6c4">deploy_web3.js</div>
  <div class="a" style="left:892.5px;top:119px;width:162px;height:40px;border:1px solid #353750;border-bottom:none;border-radius:4px 4px 0 0;background:#222336"></div>
  <svg class="a" style="left:896px;top:128px" width="18" height="21" viewBox="896 128 18 21"><path d="M903.4 131H908.2L910.6 135.8H905.5L903.1 139.4L900.7 135.8z" fill="#bfc0d6"/><path d="M907.4 138.2L910.4 141.8L908.2 146.4H903.4L900.7 141.8H905z" fill="#bfc0d6"/></svg>
  <div class="a t" style="left:921px;top:131.3px;font-size:16.6px;color:#eeeff6">1_Storage.sol</div>
  <svg class="a" style="left:1033px;top:130px" width="17" height="17" viewBox="0 0 17 17"><path d="M2.5 2.5L14.5 14.5M14.5 2.5L2.5 14.5" stroke="#7d7f97" stroke-width="3.2"/></svg>
  <div class="a" style="left:1872px;top:128px;width:58px;height:23px;background:#5a5c77;border-radius:3px"></div>
  <div class="a t" style="left:1877.5px;top:133.2px;font-size:13.2px;color:#f0f0f6;-webkit-text-stroke:0.45px #f0f0f6">3 tabs</div>
  <svg class="a" style="left:1916px;top:136.5px" width="9" height="6" viewBox="0 0 9 6"><path d="M0.8 0.8H8.2L4.5 5.3z" fill="#c9cade"/></svg>
  <!-- /editor -->
  <!-- terminal -->
  <div class="a" style="left:546.6px;top:849px;width:1393.4px;height:77px;background:#2a2c3f"></div>
  <div class="a" style="left:545px;top:926px;width:1395px;height:263px;background:#222336"></div>
  <div class="a t mono" style="left:586.95px;top:918.37px;font-size:15.75px;color:#a9aacb;-webkit-text-stroke:0.35px #a9aacb;transform:scaleY(0.88);transform-origin:0 12.1px;font-style:italic;">• Execute JavaScript scripts:</div>
  <div class="a t mono" style="left:624.75px;top:937.37px;font-size:15.75px;color:#a9aacb;-webkit-text-stroke:0.35px #a9aacb;transform:scaleY(0.88);transform-origin:0 12.1px;font-style:italic;">- Input a script directly in the command line interface</div>
  <div class="a t mono" style="left:624.75px;top:956.37px;font-size:15.75px;color:#a9aacb;-webkit-text-stroke:0.35px #a9aacb;transform:scaleY(0.88);transform-origin:0 12.1px;font-style:italic;">- Select a Javascript file in the file explorer and then run `remix.execute()` or `remix.exeCurrent()` in the command line interface</div>
  <div class="a t mono" style="left:624.75px;top:975.37px;font-size:15.75px;color:#a9aacb;-webkit-text-stroke:0.35px #a9aacb;transform:scaleY(0.88);transform-origin:0 12.1px;font-style:italic;">- Right click on a JavaScript file in the file explorer and then click `Run`</div>
  <div class="a t mono" style="left:577.50px;top:1021.37px;font-size:15.75px;color:#a9aacb;-webkit-text-stroke:0.35px #a9aacb;transform:scaleY(0.88);transform-origin:0 12.1px;">The following libraries are accessible:</div>
  <div class="a" style="left:589px;top:1044.7px;width:4.4px;height:4.4px;border-radius:50%;background:#a9aacb"></div>
  <div class="a t mono" style="left:604.43px;top:1040.37px;font-size:15.75px;color:#a9aacb;-webkit-text-stroke:0.35px #a9aacb;transform:scaleY(0.88);transform-origin:0 12.1px;text-decoration:underline;text-underline-offset:1.5px;">web3 version 1.0.0</div>
  <div class="a" style="left:589px;top:1063.7px;width:4.4px;height:4.4px;border-radius:50%;background:#a9aacb"></div>
  <div class="a t mono" style="left:604.43px;top:1059.37px;font-size:15.75px;color:#a9aacb;-webkit-text-stroke:0.35px #a9aacb;transform:scaleY(0.88);transform-origin:0 12.1px;text-decoration:underline;text-underline-offset:1.5px;">ethers.js</div>
  <div class="a" style="left:589px;top:1082.7px;width:4.4px;height:4.4px;border-radius:50%;background:#a9aacb"></div>
  <div class="a t mono" style="left:604.43px;top:1078.37px;font-size:15.75px;color:#a9aacb;-webkit-text-stroke:0.35px #a9aacb;transform:scaleY(0.88);transform-origin:0 12.1px;text-decoration:underline;text-underline-offset:1.5px;">swarmgw</div>
  <div class="a" style="left:589px;top:1101.7px;width:4.4px;height:4.4px;border-radius:50%;background:#a9aacb"></div>
  <div class="a t mono" style="left:604.43px;top:1097.37px;font-size:15.75px;color:#a9aacb;-webkit-text-stroke:0.35px #a9aacb;transform:scaleY(0.88);transform-origin:0 12.1px;">remix (run remix.help() for more info)</div>
  <div class="a" style="left:546.6px;top:849px;width:1393.4px;height:77px;background:#2a2c3f"></div>
  <svg class="a" style="left:555px;top:894px" width="15" height="16" viewBox="0 0 15 16"><path d="M2.5 3L7.5 7L12.5 3M2.5 8.5L7.5 12.5L12.5 8.5" fill="none" stroke="#a8aac6" stroke-width="2.3"/></svg>
  <svg class="a" style="left:587px;top:895.5px" width="18" height="17" viewBox="0 0 18 17"><circle cx="9" cy="8.5" r="6.6" fill="none" stroke="#a8aac6" stroke-width="2"/><path d="M4.5 4L13.5 13" stroke="#a8aac6" stroke-width="2"/></svg>
  <div class="a t" style="left:624.5px;top:895.5px;font-size:16px;color:#a8aac6">0</div>
  <div class="a" style="left:666px;top:892.5px;width:21px;height:21px;background:#2c2e42;border:1px solid #45485f;border-radius:3px"></div>
  <div class="a t" style="left:698px;top:898px;font-size:17.6px;color:#a8aac6">listen on network</div>
  <svg class="a" style="left:875px;top:893px" width="20" height="19" viewBox="0 0 20 19"><circle cx="8.2" cy="8.2" r="5.3" fill="none" stroke="#a8aac6" stroke-width="2.3"/><path d="M12.2 12.2L16.5 16.5" stroke="#a8aac6" stroke-width="3" stroke-linecap="round"/></svg>
  <div class="a" style="left:913.5px;top:887.3px;width:370.5px;height:33px;background:#353849;border:1px solid #393c51;border-radius:3px"></div>
  <div class="a t" style="left:931px;top:895.4px;font-size:18.4px;color:#8c8d9b">Search with transaction hash or address</div>
  <div class="a t" style="left:552.5px;top:1159px;font-size:19px;-webkit-text-stroke:0.4px #a9aacb;color:#a9aacb">&gt;</div>
  <div class="a" style="left:1929px;top:1078px;width:10px;height:112px;background:#454862;border-radius:5px"></div>
  <!-- /terminal -->
</div></div>
<div id="winb"></div>
</body></html>
